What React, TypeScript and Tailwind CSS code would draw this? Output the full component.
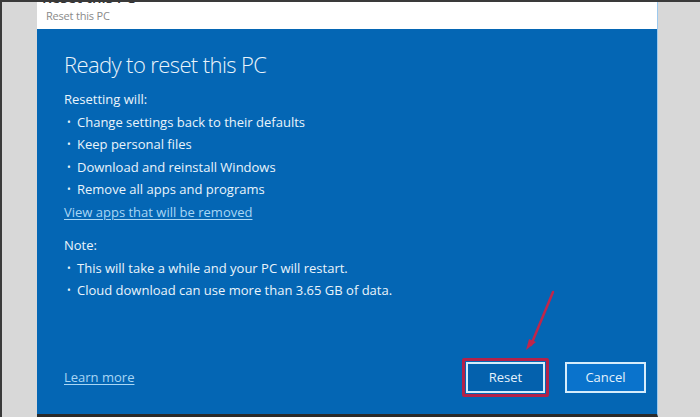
export default function App() {
  const willItems = [
    "Change settings back to their defaults",
    "Keep personal files",
    "Download and reinstall Windows",
    "Remove all apps and programs",
  ]
  const noteItems = [
    "This will take a while and your PC will restart.",
    "Cloud download can use more than 3.65 GB of data.",
  ]

  return (
    <div
      className="h-[417px] w-[700px] overflow-hidden bg-[#d8d8d8] border-t-2 border-l-2 border-[#3a3a3a] flex"
      style={{ fontFamily: '"Open Sans", "Noto Sans", sans-serif' }}
    >
      <div className="ml-[35px] w-[621px] flex flex-col border-r border-[#9cc9ee] border-b-[3px] border-b-[#2a2a2a]">
        {/* Title bar */}
        <div className="h-[27px] bg-white shrink-0">
          <div className="h-[3px] overflow-hidden pl-[5px]">
            <div className="-mt-[13px] text-[15px] font-semibold text-[#333] leading-[16px]">Reset this PC</div>
          </div>
          <div className="pl-[9px] pt-[4px] text-[11px] text-[#8a8a8a] leading-[14px] tracking-[-0.2px]">Reset this PC</div>
        </div>

        {/* Blue body */}
        <div className="flex-1 bg-[#0466b4] text-[#eaf4fb] flex flex-col px-[27px] relative">
          <h1 className="mt-[21px] text-[22px] font-light leading-[28px] tracking-[-0.6px]">Ready to reset this PC</h1>

          <div className="mt-[10px] text-[13px] leading-[22.5px]">
            <div>Resetting will:</div>
            <ul>
              {willItems.map((t) => (
                <li key={t} className="flex items-center">
                  <span className="w-[13px] pl-[3px] text-[10px]">•</span>
                  {t}
                </li>
              ))}
            </ul>
            <a className="underline text-[#a9d6f5] underline-offset-2">View apps that will be removed</a>

            <div className="mt-[11px]">Note:</div>
            <ul>
              {noteItems.map((t) => (
                <li key={t} className="flex items-center">
                  <span className="w-[13px] pl-[3px] text-[10px]">•</span>
                  {t}
                </li>
              ))}
            </ul>
          </div>

          <div className="mt-auto mb-[17px] flex items-center">
            <a className="text-[13px] underline text-[#a9d6f5] underline-offset-2">Learn more</a>
            <div className="ml-auto flex items-center gap-[16px] -mr-[16px]">
              <div className="border-[3px] border-[#b3224a] rounded-[2px] p-[1px]">
                <button className="w-[79px] h-[31px] border-2 border-[#d6ecfb] bg-[#0461ad] text-[13px] text-[#e4f2fc]">
                  Reset
                </button>
              </div>
              <button className="w-[81px] h-[31px] border-2 border-[#d6ecfb] bg-[#0a73cc] text-[13px] text-[#e4f2fc]">
                Cancel
              </button>
            </div>
          </div>

          {/* annotation arrow */}
          <svg className="absolute left-[482px] top-[258px]" width="40" height="70" viewBox="0 0 40 70">
            <line x1="34" y1="5" x2="12" y2="58" stroke="#c0264b" strokeWidth="2.5" strokeLinecap="round" />
            <path d="M7 63 L10 52 L17 55 Z" fill="#c0264b" />
          </svg>
        </div>
      </div>
    </div>
  )
}
